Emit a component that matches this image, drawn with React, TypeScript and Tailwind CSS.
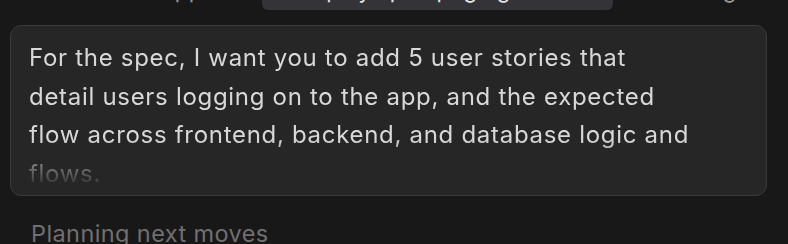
export default function App() {
  return (
    <div
      className="h-[244px] w-[788px] overflow-hidden bg-[#181818]"
      style={{ fontFamily: 'Inter, "Noto Sans", sans-serif' }}
    >
      {/* Cut-off row above */}
      <div className="-mt-[24px] flex h-[34px] items-start text-[22px] leading-[28px] tracking-[0.02em]">
        <span className="ml-[112px] w-[150px] text-[#9a9a9a]">Add app</span>
        <div className="h-[34px] w-[351px] rounded-b-[6px] bg-[#333338] pl-[30px] text-[#e6e6e6]">
          Display spec paging
        </div>
        <span className="ml-[48px] text-[#9a9a9a]">Settings</span>
      </div>

      {/* Prompt card */}
      <div className="ml-[10px] mt-[15px] h-[171px] w-[757px] overflow-hidden rounded-[11px] border border-[#3a3a3a] bg-[#262626] px-[18px] pt-[13px]">
        <p
          className="text-[24px] leading-[38.5px] tracking-[0.7px] text-[#d8d8d8]"
          style={{
            WebkitMaskImage: 'linear-gradient(to bottom, black 0, black 100px, transparent 150px)',
            maskImage: 'linear-gradient(to bottom, black 0, black 100px, transparent 150px)',
          }}
        >
          For the spec, I want you to add 5 user stories that
          <br />
          detail users logging on to the app, and the expected
          <br />
          flow across frontend, backend, and database logic and
          <br />
          flows.
        </p>
      </div>

      <div className="ml-[31px] mt-[24px] text-[23.5px] leading-[28px] tracking-[0.4px] text-[#707070]">
        Planning next moves
      </div>
    </div>
  );
}
